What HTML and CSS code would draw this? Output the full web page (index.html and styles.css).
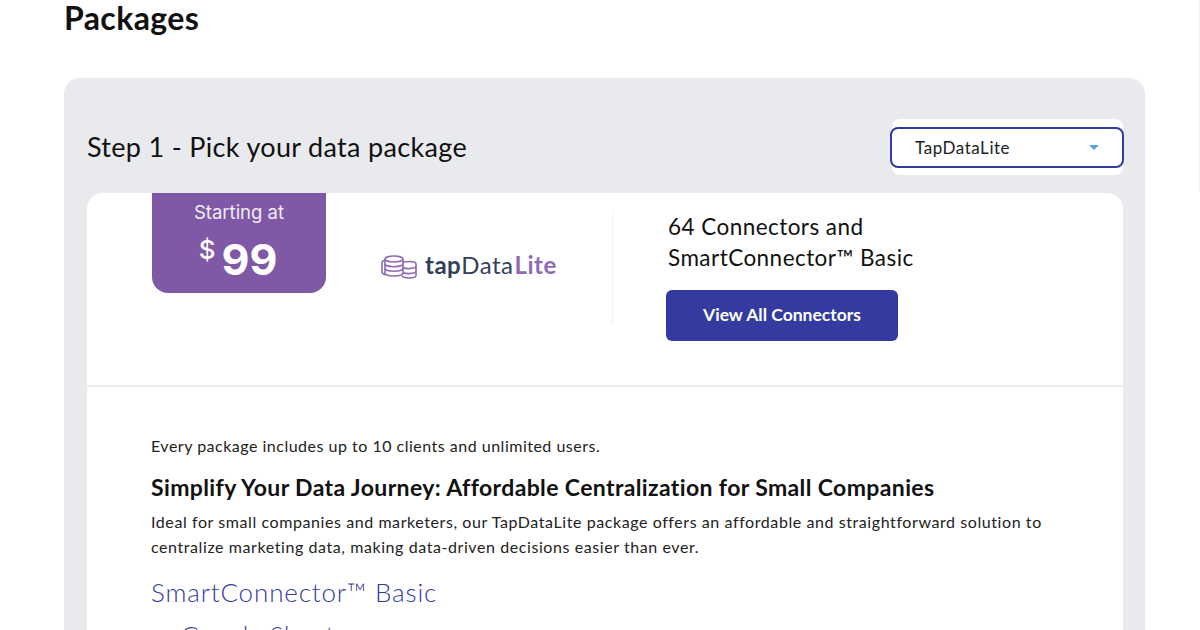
FILE: index.html
```html
<!DOCTYPE html>
<html lang="en">
<head>
<meta charset="utf-8">
<title>Packages</title>
<link rel="stylesheet" href="styles.css">
</head>
<body>
<main class="page">
  <h1 class="page-title">Packages</h1>
  <section class="panel">
    <div class="step-row">
      <h2 class="step-title">Step 1 - Pick your data package</h2>
      <div class="select-wrap">
        <div class="select"><span>TapDataLite</span><i class="caret"></i></div>
      </div>
    </div>
    <div class="card">
      <div class="card-top">
        <div class="price">
          <div class="price-label">Starting at</div>
          <div class="price-value"><span class="currency">$</span><span class="amount">99</span></div>
        </div>
        <div class="logo">
          <svg class="logo-icon" viewBox="0 0 36 24" width="36" height="24" fill="none" stroke="#8e6bb5" stroke-width="1.6">
            <ellipse cx="13" cy="4" rx="9" ry="3"/>
            <path d="M4 4v14c0 1.700 4 3 9 3s9-1.300 9-3V4"/>
            <path d="M4 8.700c0 1.700 4 3 9 3s9-1.300 9-3M4 13.300c0 1.700 4 3 9 3s9-1.300 9-3"/>
            <path d="M4 5C2 5.600 1 6.500 1 8v9c0 1.300 1.300 2.200 3.500 2.800"/>
            <path d="M22 7.500c1.200-.6 3-1 6-1 4 0 7 1 7 2.500v11.500c0 1.500-3 2.500-7 2.500-3.500 0-6-.7-7-1.900"/>
            <path d="M22 12.500c1.200.7 3.300 1.100 6 1.100 4 0 7-1 7-2.500M22 17.500c1.200.7 3.300 1.100 6 1.100 4 0 7-1 7-2.500"/>
          </svg>
          <span class="logo-text"><b class="logo-tap">tap</b><span class="logo-data">Data</span><b class="logo-lite">Lite</b></span>
        </div>
        <div class="divider"></div>
        <div class="summary">
          <p class="summary-text">64 Connectors and<br>SmartConnector™ Basic</p>
          <a class="button">View All Connectors</a>
        </div>
      </div>
      <div class="card-body">
        <p class="note">Every package includes up to 10 clients and unlimited users.</p>
        <h3 class="body-title">Simplify Your Data Journey: Affordable Centralization for Small Companies</h3>
        <p class="body-text">Ideal for small companies and marketers, our TapDataLite package offers an affordable and straightforward solution to<br>centralize marketing data, making data-driven decisions easier than ever.</p>
        <h4 class="connector-title">SmartConnector™ Basic</h4>
        <p class="connector-item">Google Sheets</p>
      </div>
    </div>
  </section>
</main>
</body>
</html>
```
FILE: styles.css
```css
* { box-sizing: border-box; }
html, body { margin: 0; height: 630px; overflow: hidden; background: #fff; }
body { font-family: "Lato", "Noto Sans", sans-serif; color: #111; }
.page { width: 1199px; padding: 0 54px 0 64px; height: 192px; box-shadow: 1px 0 0 #f0f0f0; }
.page-title { margin: 0; height: 78px; font-size: 32px; line-height: 36px; font-weight: 700; letter-spacing: .4px; }
.panel { background: #e9eaee; border-radius: 16px; padding: 41px 22px 0 23px; height: 700px; }
.step-row { display: flex; justify-content: space-between; align-items: flex-start; height: 74px; }
.step-title { margin: 14px 0 0; font-size: 27px; font-weight: 400; line-height: 1; letter-spacing: .32px; }
.select-wrap { width: 231px; height: 56px; background: #fff; border-radius: 8px; padding-top: 8px; }
.select { margin-left: -2px; width: 234px; height: 41px; border: 2px solid #343a9f; border-radius: 8px; display: flex; align-items: center; justify-content: space-between; padding: 0 24px 0 23px; font-size: 17px; letter-spacing: .55px; color: #222; background: #fff; }
.caret { width: 0; height: 0; border: 5px solid transparent; border-top: 5px solid #5c9fe0; border-bottom: 0; margin-right: -1px; }
.card { background: #fff; border-radius: 16px; height: 600px; }
.card-top { display: flex; height: 194px; border-bottom: 2px solid #eceef0; padding-left: 65px; }
.price { width: 174px; height: 100px; background: #7f59a6; border-radius: 0 0 16px 16px; color: #fff; text-align: center; font-family: "Inter", sans-serif; }
.price-label { font-size: 18.500px; line-height: 22px; margin-top: 8px; color: #f1ecf6; }
.price-value { display: flex; justify-content: center; align-items: flex-start; margin-top: 9px; }
.currency { font-size: 26px; line-height: 30px; font-weight: 500; margin-right: 6px; margin-top: 3px; }
.amount { font-size: 43px; line-height: 54px; font-weight: 700; margin-right: 2px; }
.logo { width: 286px; padding: 58px 0 0 55px; display: flex; align-items: flex-start; gap: 8px; }
.logo-icon { flex: none; margin-top: 4px; }
.logo-text { font-family: "Lato", sans-serif; font-size: 24px; line-height: 28px; letter-spacing: .5px; color: #33405a; white-space: nowrap; }
.logo-tap { font-weight: 700; }
.logo-data { font-weight: 400; }
.logo-lite { font-weight: 700; color: #8e6bb5; margin-left: 1px; }
.divider { width: 1px; height: 114px; margin-top: 17px; background: #eef2f6; }
.summary { padding: 18px 0 0 53px; }
.summary-text { margin: 0 0 17px 2px; font-size: 22.500px; line-height: 31px; letter-spacing: .45px; }
.button { display: flex; align-items: center; justify-content: center; width: 232px; height: 51px; padding-bottom: 3px; background: #343a9f; color: #fff; border-radius: 6px; font-size: 17.500px; font-weight: 700; }
.card-body { padding: 47px 64px 0; }
.note { margin: 0 0 14px; font-size: 16px; line-height: 24px; color: #222; letter-spacing: .5px; }
.body-title { margin: 0 0 7px; font-size: 23px; line-height: 30px; font-weight: 700; letter-spacing: .37px; }
.body-text { margin: 0 0 16px; font-size: 16px; line-height: 25px; color: #222; letter-spacing: .58px; }
.connector-title { margin: 0 0 9px; font-size: 26px; line-height: 34px; font-weight: 300; color: #343a9f; letter-spacing: .85px; }
.connector-item { margin: 0; padding-left: 30px; font-size: 25px; line-height: 34px; font-weight: 300; color: #343a9f; letter-spacing: .7px; }
```
